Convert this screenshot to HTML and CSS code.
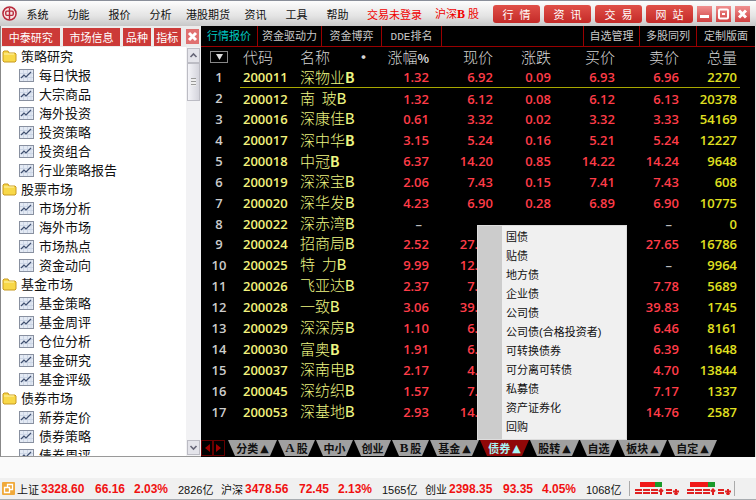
FILE: index.html
```html
<!DOCTYPE html>
<html lang="zh-CN">
<head>
    <meta charset="UTF-8">
    <meta name="viewport" content="width=device-width, initial-scale=1.0">
    <title>沪深B股</title>
    <link rel="stylesheet" href="styles.css">
</head>
<body>
    <header class="topbar">
        <svg class="logo" viewBox="0 0 16 16">
            <circle cx="8" cy="8" r="7" fill="#f6e4e4" stroke="#b8283a" stroke-width="1.6"/>
            <path d="M8 2v12M8 5.500H5.200Q4 5.500 4 7v1.500q0 1.500 1.200 1.500H8M8 5.500h2.800q1.200 0 1.200 1.500v1.500q0 1.500-1.200 1.500H8" fill="none" stroke="#b8283a" stroke-width="1.500"/>
        </svg>
        <nav class="menu">
            <a href="#">系统</a>
            <a href="#">功能</a>
            <a href="#">报价</a>
            <a href="#">分析</a>
            <a href="#">港股期货</a>
            <a href="#">资讯</a>
            <a href="#">工具</a>
            <a href="#">帮助</a>
        </nav>
        <span class="login">交易未登录</span>
        <span class="market">沪深<b>B</b> 股</span>
        <div class="actions">
            <button>行&nbsp;&nbsp;情</button>
            <button>资&nbsp;&nbsp;讯</button>
            <button>交&nbsp;&nbsp;易</button>
            <button>网&nbsp;&nbsp;站</button>
        </div>
        <div class="window-buttons">
            <button aria-label="最小化"><svg viewBox="0 0 15 16"><path d="M3 10.500h9" stroke="#fff" stroke-width="3"/></svg></button>
            <button aria-label="最大化"><svg viewBox="0 0 15 16"><rect x="3" y="3.500" width="9" height="9" rx="1" fill="none" stroke="#fff" stroke-width="2"/><path d="M6 8h3" stroke="#fff" stroke-width="2"/></svg></button>
            <button aria-label="关闭"><svg viewBox="0 0 15 16"><path d="M4 4.500l7 7M11 4.500l-7 7" stroke="#fff" stroke-width="3"/></svg></button>
        </div>
    </header>

    <main class="workspace">
        <aside class="sidebar">
            <div class="side-tabs">
                <button>中泰研究</button>
                <button>市场信息</button>
                <button>品种</button>
                <button>指标</button>
                <button class="close" aria-label="关闭"><svg viewBox="0 0 13 15"><path d="M3 4l7 7M10 4l-7 7" stroke="#fff" stroke-width="3"/></svg></button>
            </div>
            <div class="side-body">
                <ul class="tree" id="tree"></ul>
                <div class="scrollbar">
                    <button aria-label="向上"><svg viewBox="0 0 11 11"><path d="M2.500 7l3-3 3 3" fill="none" stroke="#667" stroke-width="1.600"/></svg></button>
                    <div class="thumb"></div>
                    <button class="down" aria-label="向下"><svg viewBox="0 0 11 11"><path d="M2.500 4l3 3 3-3" fill="none" stroke="#667" stroke-width="1.600"/></svg></button>
                </div>
            </div>
        </aside>

        <section class="quotes">
            <nav class="views">
                <a href="#" class="active">行情报价</a>
                <a href="#">资金驱动力</a>
                <a href="#">资金博弈</a>
                <a href="#"><span class="mono">DDE</span>排名</a>
                <span></span>
                <a href="#">自选管理</a>
                <a href="#">多股同列</a>
                <a href="#">定制版面</a>
            </nav>
            <div class="table-wrap">
                <table>
                    <colgroup>
                        <col class="c-index"><col class="c-code"><col class="c-name">
                        <col class="c-small"><col class="c-wide"><col class="c-small">
                        <col class="c-wide"><col class="c-wide"><col class="c-small">
                    </colgroup>
                    <thead>
                        <tr>
                            <th class="index"><button class="filter" aria-label="筛选"><svg viewBox="0 0 16 10"><path d="M5 2h7l-3.500 6z" fill="#ddd"/></svg></button></th>
                            <th class="code">代码</th>
                            <th class="name">名称<span class="dot">•</span></th>
                            <th>涨幅<b>%</b></th>
                            <th>现价</th>
                            <th>涨跌</th>
                            <th>买价</th>
                            <th>卖价</th>
                            <th>总量</th>
                        </tr>
                    </thead>
                    <tbody id="rows"></tbody>
                </table>
            </div>
            <div class="category-bar">
                <div class="pager">
                    <button aria-label="上一页"><svg viewBox="0 0 12 14"><path d="M9 3v8L4 7z" fill="#a00000"/></svg></button>
                    <button aria-label="下一页"><svg viewBox="0 0 12 14"><path d="M3 3v8l5-4z" fill="#a00000"/></svg></button>
                </div>
                <div class="category long"><button>分类<i>▲</i></button></div>
                <div class="category"><button><b>A</b>股</button></div>
                <div class="category"><button>中小</button></div>
                <div class="category"><button>创业</button></div>
                <div class="category"><button><b>B</b>股</button></div>
                <div class="category long"><button>基金<i>▲</i></button></div>
                <div class="category long active">
                    <button>债券<i>▲</i></button>
                    <ul class="popup">
                        <li>国债</li>
                        <li>贴债</li>
                        <li>地方债</li>
                        <li>企业债</li>
                        <li>公司债</li>
                        <li>公司债(合格投资者)</li>
                        <li>可转换债券</li>
                        <li>可分离可转债</li>
                        <li>私募债</li>
                        <li>资产证券化</li>
                        <li>回购</li>
                    </ul>
                </div>
                <div class="category long"><button>股转<i>▲</i></button></div>
                <div class="category"><button>自选</button></div>
                <div class="category long"><button>板块<i>▲</i></button></div>
                <div class="category long"><button>自定<i>▲</i></button></div>
            </div>
        </section>
    </main>

    <footer class="status">
        <svg class="status-icon" viewBox="0 0 13 13">
            <rect width="13" height="13" rx="1" fill="#f0a93a"/>
            <path d="M5.500 5V2.500h5v5H8M2.500 5.500h5v5h-5z" fill="none" stroke="#fff" stroke-width="1.300"/>
        </svg>
        <div class="indexes">
            <div class="quote"><span>上证</span><b>3328.60</b><b>66.16</b><b>2.03%</b><span>2826亿</span></div>
            <div class="quote"><span>沪深</span><b>3478.56</b><b>72.45</b><b>2.13%</b><span>1565亿</span></div>
            <div class="quote"><span>创业</span><b>2398.35</b><b>93.35</b><b>4.05%</b><span>1068亿</span></div>
        </div>
        <div class="signals">
            <svg viewBox="0 0 44 13">
                <path d="M5 0h15v5H5z" fill="#f01818"/><path d="M20 0h7v5h-7z" fill="#1a9a2a"/>
                <path d="M0 8h7M0 11h7M8 8h7M8 11h7M16 8h7M16 11h7M31 8h6M31 11h6M26 13V7M24 9.500L26 7.500l2 2M38 9.500h6M41 7v6M39.500 11l1.500 1.500 1.500-1.500" fill="none" stroke="#e02020" stroke-width="2"/>
            </svg>
            <svg viewBox="0 0 44 13">
                <path d="M3 0h18v5H3z" fill="#f01818"/><path d="M21 0h7v5h-7z" fill="#1a9a2a"/>
                <path d="M0 8h7M0 11h7M8 8h7M8 11h7M16 8h7M16 11h7M31 8h6M31 11h6M26 13V7M24 9.500L26 7.500l2 2M38 9.500h6M41 7v6M39.500 11l1.500 1.500 1.500-1.500" fill="none" stroke="#e02020" stroke-width="2"/>
            </svg>
        </div>
    </footer>

    <script src="script.js"></script>
</body>
</html>
```
FILE: styles.css
```css
* {
    box-sizing: border-box;
}
body {
    margin: 0;
    height: 100vh;
    display: flex;
    flex-direction: column;
    overflow: hidden;
    font-family: "Liberation Sans", "Noto Sans CJK SC", sans-serif;
    font-size: 11px;
    background: #fafafa;
    color: #111;
}
a {
    color: inherit;
    text-decoration: none;
}
button {
    font: inherit;
    color: inherit;
    padding: 0;
    border: 0;
    display: flex;
    align-items: center;
    justify-content: center;
    white-space: nowrap;
}
ul {
    list-style: none;
    margin: 0;
    padding: 0;
}

/* top bar */
.topbar {
    display: flex;
    align-items: center;
    height: 26px;
    flex: none;
    padding: 0 6px 0 2px;
    border-top: 1px solid #8a8f9a;
    background: linear-gradient(#fdfdfd, #e4e4e4 60%, #c8c8c8);
}
.logo {
    width: 15px;
    height: 15px;
    flex: none;
}
.menu {
    display: flex;
}
.menu a {
    min-width: 41px;
    padding: 0 5px;
    text-align: center;
}
.login, .market {
    color: #f00000;
    white-space: nowrap;
}
.login {
    margin-left: 9px;
}
.market {
    margin-left: 13px;
}
.market b {
    font-family: "Liberation Serif", serif;
    font-size: 12px;
}
.actions {
    display: flex;
    gap: 4px;
    margin-left: auto;
}
.actions button {
    width: 47px;
    height: 18px;
    border-radius: 3px;
    color: #fff;
    background: linear-gradient(#e05048, #c42a28);
}
.window-buttons {
    display: flex;
    gap: 4px;
    margin-left: 4px;
}
.window-buttons button {
    width: 15px;
    height: 16px;
    background: linear-gradient(#f09090, #d04040);
}

/* sidebar */
.workspace {
    display: flex;
    flex: 1;
    min-height: 0;
}
.sidebar {
    width: 201px;
    flex: none;
    display: flex;
    flex-direction: column;
    border-left: 1px solid #888;
    border-bottom: 1px solid #999;
    background: #fff;
}
.side-tabs {
    display: flex;
    align-items: center;
    gap: 3px;
    height: 21px;
    flex: none;
    padding: 0 2px 0 1px;
    background: #ececec;
}
.side-tabs button {
    flex: 57 0 0;
    height: 18px;
    color: #fff;
    background: #cc3a38;
}
.side-tabs button:nth-child(3), .side-tabs button:nth-child(4) {
    flex-grow: 27;
}
.side-tabs .close {
    flex: none;
    width: 13px;
    height: 15px;
    margin-left: 2px;
    background: #e07070;
}
.side-body {
    display: flex;
    flex: 1;
    min-height: 0;
}
.tree {
    flex: 1;
    overflow: hidden;
    font-size: 13px;
    line-height: 19px;
}
.tree li {
    display: flex;
    align-items: center;
    gap: 5px;
    height: 19px;
    padding-left: 18px;
}
.tree .folder {
    padding-left: 1px;
    gap: 4px;
}
.tree svg {
    width: 15px;
    height: 15px;
    flex: none;
}
.scrollbar {
    display: flex;
    flex-direction: column;
    width: 15px;
    padding: 1px;
    background: #f2f2f4;
}
.scrollbar button, .thumb {
    height: 15px;
    flex: none;
    border: 1px solid #bcbcc4;
    background: #e4e4ea;
}
.scrollbar svg {
    width: 11px;
}
.thumb {
    height: 38px;
    background: repeating-linear-gradient(#999 0 1px, #eee 1px 3px) center / 5px 8px no-repeat, linear-gradient(90deg, #f4f4f8, #d4d4dc);
}
.scrollbar .down {
    margin-top: auto;
}

/* quotes */
.quotes {
    flex: 1;
    min-width: 0;
    display: flex;
    flex-direction: column;
    background: #000;
    border-right: 1px solid #ddd;
}
.views {
    display: grid;
    grid-template-columns: 57px 64px 60px 60px 1fr 56px 57px 58px;
    height: 21px;
    flex: none;
    border-bottom: 1px solid #900;
    color: #c8c8c8;
    line-height: 20px;
    text-align: center;
    white-space: nowrap;
}
.views > * {
    border-right: 1px solid #900;
}
.views > :last-child {
    border-right: 0;
}
.views .active {
    color: #00c8c0;
}
.mono {
    font-family: "Liberation Mono", monospace;
    font-weight: 400;
}
.table-wrap {
    flex: 1;
    min-height: 0;
    padding: 0 15px 18px 0;
}
table {
    width: 100%;
    height: 100%;
    table-layout: fixed;
    border-collapse: collapse;
    font-family: "Open Sans", "Noto Sans CJK SC", sans-serif;
    font-size: 13px;
    line-height: 14px;
}
.c-index {
    width: 39px;
}
.c-code {
    width: 57px;
}
.c-name {
    width: 77px;
}
.c-small {
    width: 58px;
}
.c-wide {
    width: 64px;
}
th, td {
    padding: 0 3px 0 0;
    text-align: right;
    white-space: nowrap;
}
thead tr {
    height: 20px;
}
tbody tr {
    height: 20px;
}
th {
    font-family: "Noto Sans CJK SC", sans-serif;
    font-size: 15px;
    font-weight: 300;
    color: #d4d4d4;
}
td {
    font-weight: 600;
    color: #ff3c48;
}
th b {
    font-size: 12px;
    font-weight: 700;
}
.index {
    text-align: center;
    color: #ccc;
}
.code, .name {
    padding-left: 3px;
    text-align: left;
}
td.code {
    color: #f2f27c;
}
td.name {
    font-family: "Noto Sans CJK SC", sans-serif;
    font-size: 15px;
    font-weight: 300;
    color: #eef682;
}
.name b {
    font-size: 14px;
    font-weight: 700;
}
.name .mono {
    font-size: 16px;
}
.dot {
    float: right;
    font-weight: 700;
}
td.volume {
    color: #e0e020;
}
td.none {
    color: #bbb;
    padding-right: 10px;
}
tr.selected td:not(.index) {
    border-bottom: 1px solid #a8a800;
}
.filter {
    width: 18px;
    height: 12px;
    margin: 0 auto;
    border: 1px solid #888;
    background: #000;
}
.filter svg {
    width: 16px;
}

/* category tabs */
.category-bar {
    display: flex;
    height: 17px;
    flex: none;
    padding-bottom: 1px;
}
.pager {
    display: flex;
    width: 27px;
}
.pager button {
    width: 12px;
    border: 1px solid #600;
    background: #000;
}
.pager svg {
    width: 12px;
    flex: none;
}
.category {
    position: relative;
    display: flex;
    width: 38px;
}
.category.long {
    width: 50px;
}
.category > button {
    flex: 1;
    margin-right: 1px;
    font-family: "Noto Sans CJK SC", sans-serif;
    font-weight: 700;
    color: #111;
    background: #a0a0a0;
    clip-path: polygon(0 0, 100% 0, calc(100% - 7px) 100%, 7px 100%);
}
.category b {
    font-family: "Liberation Serif", serif;
    font-size: 13px;
    margin-right: 2px;
}
.category i {
    font-family: "DejaVu Sans", sans-serif;
    font-style: normal;
    font-weight: 400;
    margin-left: 2px;
}
.category.active > button {
    color: #a8f4f4;
    background: #900808;
}
.popup {
    position: absolute;
    bottom: 100%;
    left: -3px;
    width: 150px;
    padding: 2px 0;
    border: 1px solid #ddd;
    background: linear-gradient(90deg, #ccc 24px, #f0f0f0 24px);
    color: #111;
    line-height: 19px;
}
.popup li {
    padding-left: 28px;
}

/* status bar */
.status {
    display: flex;
    align-items: center;
    height: 22px;
    flex: none;
    margin-top: 21px;
    padding-left: 2px;
    border-bottom: 1px solid #a8acb0;
    background: #f0f0f0;
}
.status-icon {
    width: 13px;
    flex: none;
    margin-right: 2px;
}
.indexes {
    display: flex;
}
.quote {
    display: grid;
    grid-template-columns: 24px 54px 39px 44px 43px;
    align-items: center;
    white-space: nowrap;
}
.quote b {
    font-size: 12px;
    color: #f01010;
}
.signals {
    display: flex;
    gap: 8px;
    padding: 1px 3px 1px 5px;
    border: solid #aaa;
    border-width: 0 1px;
}
.signals svg {
    width: 44px;
    height: 13px;
}
```
FILE: script.js
```js
const tree = [
    ['策略研究', ['每日快报', '大宗商品', '海外投资', '投资策略', '投资组合', '行业策略报告']],
    ['股票市场', ['市场分析', '海外市场', '市场热点', '资金动向']],
    ['基金市场', ['基金策略', '基金周评', '仓位分析', '基金研究', '基金评级']],
    ['债券市场', ['新券定价', '债券策略', '债券周评']]
];

const folderIcon = '<svg viewBox="0 0 15 15"><path d="M1 3l1-1h4l1 2h6l1 1v7l-1 1H2l-1-1z" fill="#f8d848" stroke="#c89a20"/><path d="M2 5h10" stroke="#fff4b0"/></svg>';
const chartIcon = '<svg viewBox="0 0 15 15"><rect x=".5" y="1.500" width="14" height="12" fill="#e4eaf4" stroke="#8890a0"/><path d="M4.500 2v11M8.500 2v11M12 2v11M1 5.500h13M1 9.500h13" stroke="#ccd6e6"/><path d="M2 10l3-3 2 2 5-5" fill="none" stroke="#405070" stroke-width="1.200"/></svg>';

document.getElementById('tree').innerHTML = tree.map(([title, items]) =>
    `<li class="folder">${folderIcon}${title}</li>` +
    items.map(item => `<li>${chartIcon}${item}</li>`).join('')
).join('');

const wide = '<span class="mono">B</span>';
const bold = '<b>B</b>';

// code, name, change %, price, change, bid, ask, volume
const quotes = [
    ['200011', '深物业' + bold, '1.32', '6.92', '0.09', '6.93', '6.96', '2270'],
    ['200012', '南&nbsp; 玻' + wide, '1.32', '6.12', '0.08', '6.12', '6.13', '20378'],
    ['200016', '深康佳' + wide, '0.61', '3.32', '0.02', '3.32', '3.33', '54169'],
    ['200017', '深中华' + bold, '3.15', '5.24', '0.16', '5.21', '5.24', '12227'],
    ['200018', '中冠' + bold, '6.37', '14.20', '0.85', '14.22', '14.24', '9648'],
    ['200019', '深深宝' + wide, '2.06', '7.43', '0.15', '7.41', '7.43', '608'],
    ['200020', '深华发' + wide, '4.23', '6.90', '0.28', '6.89', '6.90', '10775'],
    ['200022', '深赤湾' + wide, '–', '–', '–', '–', '–', '0'],
    ['200024', '招商局' + wide, '2.52', '27.65', '0.68', '27.64', '27.65', '16786'],
    ['200025', '特&nbsp; 力' + wide, '9.99', '12.22', '1.11', '12.22', '–', '9964'],
    ['200026', '飞亚达' + wide, '2.37', '7.78', '0.18', '7.77', '7.78', '5689'],
    ['200028', '一致' + wide, '3.06', '39.80', '1.18', '39.80', '39.83', '1745'],
    ['200029', '深深房' + wide, '1.10', '6.45', '0.07', '6.44', '6.46', '8161'],
    ['200030', '富奥' + bold, '1.91', '6.39', '0.12', '6.38', '6.39', '1648'],
    ['200037', '深南电' + wide, '2.17', '4.70', '0.10', '4.69', '4.70', '13844'],
    ['200045', '深纺织' + wide, '1.57', '7.13', '0.11', '7.13', '7.17', '1337'],
    ['200053', '深基地' + wide, '2.93', '14.76', '0.42', '14.75', '14.76', '2587']
];

document.getElementById('rows').innerHTML = quotes.map(([code, name, ...values], i) => {
    const cells = values.map((value, j) => {
        const cls = j === 5 ? 'volume' : value === '–' ? 'none' : '';
        return `<td class="${cls}">${value}</td>`;
    }).join('');
    return `<tr class="${i === 0 ? 'selected' : ''}"><td class="index">${i + 1}</td><td class="code">${code}</td><td class="name">${name}</td>${cells}</tr>`;
}).join('');
```
